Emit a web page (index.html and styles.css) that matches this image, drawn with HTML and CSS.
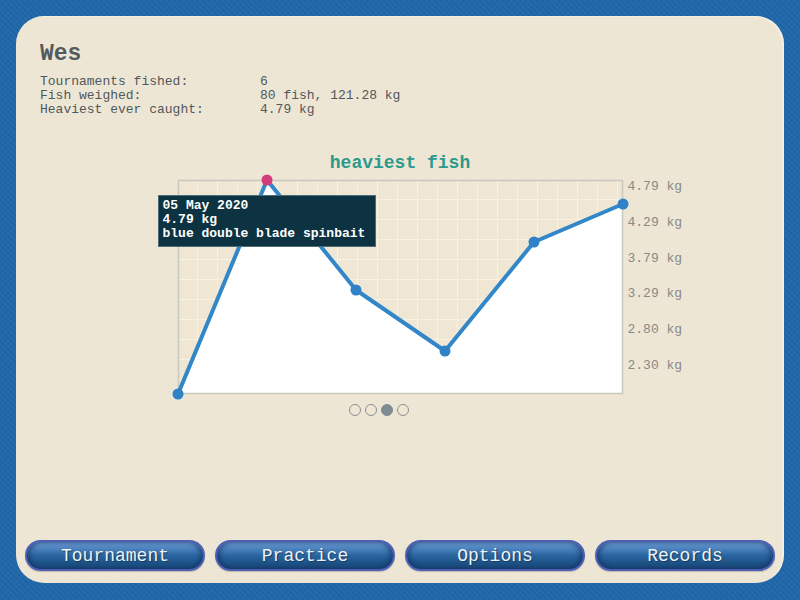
FILE: index.html
```html
<!DOCTYPE html>
<html>
<head>
<meta charset="utf-8">
<link rel="stylesheet" href="styles.css">
</head>
<body>
<div class="panel">
  <h1 class="name">Wes</h1>
  <div class="stats">
    <span>Tournaments fished:</span><span>6</span>
    <span>Fish weighed:</span><span>80 fish, 121.28 kg</span>
    <span>Heaviest ever caught:</span><span>4.79 kg</span>
  </div>
  <div class="chart-title">heaviest fish</div>
  <div class="chart">
    <div class="spacer"></div>
    <div class="plot">
      <svg class="plot-svg" width="445" height="214" viewBox="0 0 445 214">
        <defs>
          <pattern id="grid" width="20" height="20" patternUnits="userSpaceOnUse">
            <rect width="20" height="20" fill="#efe6d3"/>
            <path d="M20 0 V20 M0 20 H20" stroke="#f9f2e2" stroke-width="2" fill="none"/>
          </pattern>
        </defs>
        <rect x="0" y="0" width="445" height="214" fill="url(#grid)"/>
        <polygon points="0,214 89,0 178,110 267,171 356,62 445,24 445,214" fill="#ffffff"/>
        <rect x="0.5" y="0.5" width="444" height="213" fill="none" stroke="#c9c8bf" stroke-width="1.5"/>
        <polyline points="0,214 89,0 178,110 267,171 356,62 445,24" fill="none" stroke="#3187c8" stroke-width="4" stroke-linejoin="round"/>
        <circle cx="0" cy="214" r="5.5" fill="#2f82c6"/>
        <circle cx="89" cy="0" r="5.5" fill="#d33c7a"/>
        <circle cx="178" cy="110" r="5.5" fill="#2f82c6"/>
        <circle cx="267" cy="171" r="5.5" fill="#2f82c6"/>
        <circle cx="356" cy="62" r="5.5" fill="#2f82c6"/>
        <circle cx="445" cy="24" r="5.5" fill="#2f82c6"/>
      </svg>
      <div class="tooltip">
        <div>05 May 2020</div>
        <div>4.79 kg</div>
        <div>blue double blade spinbait</div>
      </div>
    </div>
    <div class="axis">
      <span>4.79 kg</span>
      <span>4.29 kg</span>
      <span>3.79 kg</span>
      <span>3.29 kg</span>
      <span>2.80 kg</span>
      <span>2.30 kg</span>
    </div>
  </div>
  <div class="pager">
    <span class="dot"></span>
    <span class="dot"></span>
    <span class="dot active"></span>
    <span class="dot"></span>
  </div>
  <div class="buttons">
    <button class="btn">Tournament</button>
    <button class="btn">Practice</button>
    <button class="btn">Options</button>
    <button class="btn">Records</button>
  </div>
</div>
</body>
</html>
```

FILE: styles.css
```css
html, body {
  margin: 0;
  padding: 0;
}
body {
  width: 800px;
  height: 600px;
  overflow: hidden;
  background-color: #1f67a9;
  background-image:
    repeating-linear-gradient(45deg, rgba(255,255,255,0.03) 0 2px, transparent 2px 4px),
    repeating-linear-gradient(-45deg, rgba(0,0,0,0.03) 0 2px, transparent 2px 4px);
  font-family: "Liberation Mono", "DejaVu Sans Mono", monospace;
  padding-top: 16px;
  box-sizing: border-box;
}
.panel {
  margin: 0 16px;
  height: 567px;
  box-sizing: border-box;
  background: #eee6d5;
  border-radius: 28px;
  box-shadow: inset -2px 1px 0 rgba(255,255,255,0.35);
  padding: 25px 9px 12px 9px;
  display: flex;
  flex-direction: column;
}
.name {
  margin: 0 0 0 15px;
  font-size: 23px;
  line-height: 26px;
  font-weight: bold;
  color: #525c60;
}
.stats {
  margin: 8px 0 0 15px;
  display: grid;
  grid-template-columns: 220px auto;
  font-size: 13px;
  line-height: 14px;
  color: #4f585c;
}
.chart-title {
  margin-top: 36px;
  text-align: center;
  font-size: 18px;
  line-height: 20px;
  font-weight: bold;
  color: #2b9a8c;
}
.chart {
  margin-top: 7px;
  display: grid;
  grid-template-columns: 1fr 445px 1fr;
}
.plot {
  position: relative;
  height: 214px;
}
.plot-svg {
  display: block;
  overflow: visible;
}
.tooltip {
  position: absolute;
  left: -20px;
  top: 15px;
  width: 218px;
  height: 52px;
  box-sizing: border-box;
  padding: 3px 4px;
  background: #0d3342;
  border: 1px solid #4c6c78;
  color: #ffffff;
  font-size: 13px;
  line-height: 14px;
  font-weight: bold;
  white-space: nowrap;
}
.axis {
  display: flex;
  flex-direction: column;
  gap: 22.8px;
  padding-left: 5px;
  font-size: 13px;
  line-height: 13px;
  color: #878a86;
}
.pager {
  margin-top: 10px;
  padding-right: 42px;
  display: flex;
  justify-content: center;
  gap: 4px;
}
.dot {
  width: 12px;
  height: 12px;
  box-sizing: border-box;
  border-radius: 50%;
  border: 1.5px solid #8c9194;
}
.dot.active {
  background: #7d8b92;
  border-color: #7d8b92;
}
.buttons {
  margin-top: auto;
  display: flex;
  gap: 10px;
}
.btn {
  width: 180px;
  height: 31px;
  border-radius: 16px;
  border: 2px solid #4d5fb5;
  background: linear-gradient(to bottom, #74a3d6 0%, #4f86c2 22%, #2a65a0 50%, #1e5589 75%, #1c4c7c 100%);
  box-shadow: inset 3px 0 5px rgba(20,40,90,0.5), inset -3px 0 5px rgba(20,40,90,0.5), 0 1px 1px rgba(0,0,0,0.2);
  color: #eef2f4;
  font-family: "Liberation Mono", "DejaVu Sans Mono", monospace;
  font-size: 18px;
  line-height: 20px;
  padding: 0;
  text-shadow: 1px 1px 1px #163a60;
}
```
